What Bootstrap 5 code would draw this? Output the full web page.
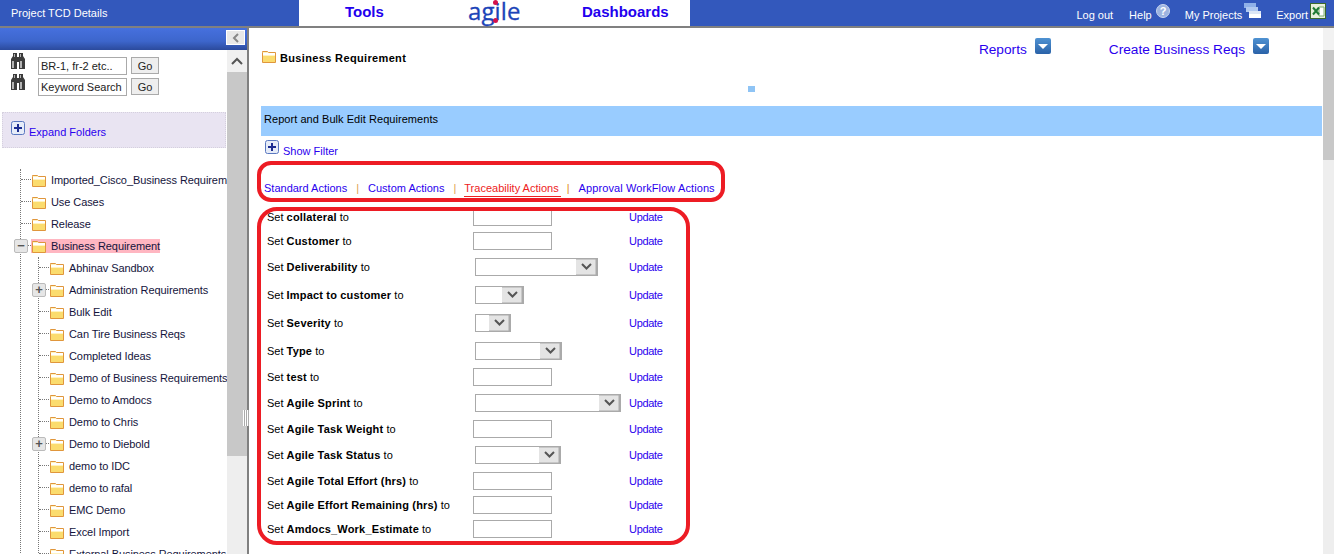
<!DOCTYPE html>
<html lang="en">
<head>
  <meta charset="UTF-8" />
  <title>Project TCD Details</title>
  <link href="https://cdn.jsdelivr.net/npm/bootstrap@5.3.3/dist/css/bootstrap.min.css" rel="stylesheet">
  <style>
    html, body { height: 554px; overflow: hidden; }
    body { font-family: "Liberation Sans", Arial, sans-serif; font-size: 11px; color: #000; background: #fff; }
    a { color: #2a00ee; text-decoration: none; }

    .top-head { height: 28px; background: #3358bc; border-bottom: 2px solid #808080; color: #fff; }
    .head-title { width: 299px; padding-left: 11px; }
    .head-mid { width: 391px; background: #fff; padding-left: 46px; }
    .head-mid a { font-size: 15px; font-weight: 700; color: #2200ee; line-height: 24px; }
    .tools-link { width: 123px; }
    .logo-wrap { width: 114px; height: 26px; }
    .logo-word { font-family: "Open Sans", sans-serif; font-size: 24px; line-height: 22px; color: #1c44b8; letter-spacing: .1px; display: block; -webkit-text-stroke: .3px #1c44b8; }
    .logo-dot { position: absolute; width: 5px; height: 5px; border-radius: 50%; background: #d3124a; left: 25px; }
    .dot-top { top: 0; }
    .dot-low { top: 18px; }
    .head-right { flex: 1; height: 26px; padding-right: 8px; }
    .head-right span { margin-top: 7px; line-height: 16px; }
    .gap-help { margin-left: 16px; }
    .gap-icon { margin-left: 4px; margin-top: 4px; }
    .gap-proj { margin-left: 15px; }
    .gap-icon2 { margin-left: 2px; margin-top: 3px; }
    .gap-exp { margin-left: 15px; }

    .work-area { height: 526px; }
    .side-pane { width: 247px; flex: none; }
    .side-bar-top { height: 22px; background: linear-gradient(#4670de, #3d66cc 60%, #2b4a9c); padding: 2px 2px 0 0; }
    .collapse-btn { width: 19px; height: 15px; background: #e8e8e8; border: 1px solid #fff; }
    .side-scroll { height: 504px; }
    .side-content { width: 227px; overflow: hidden; }
    .scroll-track { width: 20px; background: #eee; }
    .scroll-up { height: 22px; background: #f0f0f0; }
    .scroll-thumb { height: 384px; background: #c8c8c8; }
    .gutter { width: 2px; background: #808080; flex: none; }
    .grip { position: absolute; left: -4px; top: 382px; width: 6px; height: 16px; background: repeating-linear-gradient(90deg, #fff 0 1px, #aaa 1px 2px); }

    .search-top { padding-top: 3px; }
    .search-line { height: 21px; padding-left: 10px; }
    .search-box { width: 89px; height: 18px; margin: 4px 4px 0 12px; border: 1px solid #aaa; padding: 0 2px; font-size: 11px; font-family: inherit; color: #222; }
    .go-btn { width: 28px; height: 17px; margin-top: 4px; background: #eee; border: 1px solid #aaa; font-size: 11px; padding: 0; color: #222; }
    .expand-box { margin: 17px 1px 21px 2px; height: 36px; background: #e9e4f2; border: 1px dotted #d5d0de; padding: 8px 0 0 8px; }
    .expand-box a { padding-top: 3px; }

    .tree-root, .tree-sub { list-style: none; padding: 0; margin: 0; border-left: 1px dotted #777; }
    .tree-root { margin-left: 20px; white-space: nowrap; }
    .tree-sub { margin-left: 6px; }
    .tree-root li { position: relative; padding-left: 11px; }
    .tree-root li::before { content: ""; position: absolute; left: 0; top: 10px; width: 10px; border-top: 1px dotted #777; }
    .tree-row { height: 22px; color: #14143c; gap: 5px; letter-spacing: -.08px; }
    .tree-row svg, .tree-hit svg { flex: none; }
    .tree-hit { background: #ffb6c1; height: 14px; gap: 5px; margin-left: -1px; padding-left: 1px; }
    .tree-box { position: absolute; top: 4px; left: -7px; width: 14px; height: 14px; background: #e6e6e6; border: 1px solid #bbb; border-radius: 2px; color: #555; font: 700 13px/11px "Liberation Sans", sans-serif; text-align: center; z-index: 1; }

    .main-pane { min-width: 0; }
    .main-body { width: 1074px; padding-left: 12px; }
    .main-title { height: 78px; padding-right: 54px; }
    .title-name { padding: 21px 0 0 1px; height: 40px; }
    .title-name b { font-size: 11px; letter-spacing: .35px; }
    .title-link { font-size: 13.7px; color: #2a00ee; margin-top: 11px; line-height: 21px; }
    .drop-btn { position: relative; width: 16px; height: 16px; margin: 10px 0 0 8px; background: linear-gradient(#4f92d2, #2a62a8); border-radius: 2px; }
    .drop-btn::after { content: ""; position: absolute; left: 3px; top: 6px; border: 5px solid transparent; border-top-color: #fff; border-bottom: 0; }
    .gap-create { margin-left: 58px; }
    .tick-mark { position: absolute; left: 487px; top: 58px; width: 7px; height: 6px; background: #8fc4f5; }
    .band { width: 1061px; height: 30px; background: #99ccff; padding: 0 0 4px 3px; letter-spacing: .05px; }
    .filter-line { height: 44px; padding: 4px 0 0 4px; }
    .filter-line a { padding-top: 3px; }
    .action-tabs { height: 25px; padding-left: 3px; }
    .action-tabs i { font-style: normal; color: #e0a050; margin: 0 9px; }
    .action-tabs .on { color: #ee2222; border-bottom: 1px solid #ee2222; padding-right: 2px; margin-left: -1px; height: 17px; }
    .action-tabs .on + i { margin: 0 9px 0 6px; color: #e08a20; }
    .tab-last { letter-spacing: .1px; }
    .set-line { padding-left: 6px; }
    .set-line b { letter-spacing: .18px; }
    .set-line a { letter-spacing: -.3px; }
    .set-label { width: 206px; }
    .set-ctl { width: 156px; }
    .h-24 { height: 24px; }
    .h-28 { height: 28px; }
    .set-input { width: 79px; height: 18px; border: 1px solid #aaa; }
    .set-pick { appearance: none; height: 18px; margin-left: 2px; border: 1px solid #aaa; padding: 0; background: #fff url("data:image/svg+xml,%3Csvg xmlns='http://www.w3.org/2000/svg' width='21' height='18'%3E%3Crect width='21' height='18' fill='%23e4e4e4'/%3E%3Cpath d='M0 0h21v1.500H0zM0 16.500h21V18H0zM19.500 0H21v18h-1.500z' fill='%23aaa'/%3E%3Cpath d='M6 6l4.500 4.500L15 6' fill='none' stroke='%23555' stroke-width='2'/%3E%3C/svg%3E") no-repeat right center; }
    .w-a { width: 123px; } .w-b { width: 49px; } .w-c { width: 36px; } .w-d { width: 87px; } .w-e { width: 146px; } .w-f { width: 86px; }

    .main-scroll { width: 11px; background: #eee; flex: none; margin-left: auto; }
    .main-scroll-up { height: 22px; background: #f2f2f2; }
    .main-scroll-thumb { height: 110px; background: #c8c8c8; }
    .ring { position: absolute; border: 4px solid #ed1c24; pointer-events: none; }
    .ring-a { left: 8px; top: 133px; width: 468px; height: 41px; border-radius: 14px; }
    .ring-b { left: 8px; top: 179px; width: 433px; height: 338px; border-radius: 20px; }
  </style>
</head>
<body>
  <svg width="0" height="0" class="position-absolute">
    <symbol id="fold" viewBox="0 0 14 13">
      <path d="M.5 2.500V1.500h5l1 1h7v10H.5z" fill="#fff3c0" stroke="#e0963c"/>
      <rect x="1" y="3" width="12" height="2" fill="#fff"/>
      <path d="M1 6h12v6H1z" fill="#fbdc6e"/>
    </symbol>
    <symbol id="plus" viewBox="0 0 14 14">
      <rect x=".5" y=".5" width="13" height="13" rx="2" fill="#e6ecf8" stroke="#5a78c0"/>
      <path d="M7 3v8M3 7h8" stroke="#1c2c90" stroke-width="2"/>
    </symbol>
    <symbol id="binoc" viewBox="0 0 16 16">
      <path d="M3 0h4v4h2V0h4v3l2 3v10H9V9H7v7H1V6l2-3z" fill="#3c3c3c"/>
      <path d="M2 8h2v7H2zM10 8h2v7h-2zM4 1h1v3H4zM10 1h1v3h-1z" fill="#b4b4b4"/>
    </symbol>
  </svg>

  <header class="top-head d-flex">
    <div class="head-title d-flex align-items-center">Project TCD Details</div>
    <div class="head-mid d-flex align-items-start">
      <a href="#" class="tools-link">Tools</a>
      <div class="logo-wrap position-relative">
        <span class="logo-word">agile</span>
        <span class="logo-dot dot-top"></span>
        <span class="logo-dot dot-low"></span>
      </div>
      <a href="#">Dashboards</a>
    </div>
    <div class="head-right d-flex align-items-start justify-content-end">
      <span>Log out</span>
      <span class="gap-help">Help</span>
      <svg class="gap-icon" width="14" height="14" viewBox="0 0 14 14"><circle cx="7" cy="7" r="6.500" fill="#9db4e0" stroke="#c8d4ee"/><text x="7" y="11" text-anchor="middle" font-size="11" font-weight="700" fill="#fff" font-family="Liberation Sans">?</text></svg>
      <span class="gap-proj">My Projects</span>
      <svg class="gap-icon2" width="17" height="16" viewBox="0 0 17 16"><rect x="0" y="0" width="12" height="5" fill="#8fb0e8"/><rect x="2" y="4" width="12" height="5" fill="#b0c8f0"/><rect x="5" y="8" width="12" height="7" fill="#dce6f6"/><rect x="5" y="11" width="12" height="4" fill="#fff"/></svg>
      <span class="gap-exp">Export</span>
      <svg class="gap-icon2" width="16" height="16" viewBox="0 0 16 16"><rect x=".5" y=".5" width="15" height="15" fill="#e8f0dc" stroke="#3c6a2c"/><path d="M9 4h5v9H9z" fill="#fff" stroke="#7aaa70"/><path d="M3 4.500l6 7M9 4.500l-6 7" stroke="#1f7a34" stroke-width="2"/></svg>
    </div>
  </header>

  <div class="work-area d-flex">
    <aside class="side-pane">
      <div class="side-bar-top d-flex justify-content-end">
        <div class="collapse-btn d-flex align-items-center justify-content-center">
          <svg width="8" height="10" viewBox="0 0 8 10"><path d="M6 1L2 5l4 4" fill="none" stroke="#888" stroke-width="2"/></svg>
        </div>
      </div>
      <div class="side-scroll d-flex">
        <div class="side-content">
          <div class="search-top">
            <div class="search-line d-flex align-items-start">
              <svg width="16" height="16"><use href="#binoc"/></svg>
              <input class="search-box" value="BR-1, fr-2 etc..">
              <button class="go-btn">Go</button>
            </div>
            <div class="search-line d-flex align-items-start">
              <svg width="16" height="16"><use href="#binoc"/></svg>
              <input class="search-box" value="Keyword Search">
              <button class="go-btn">Go</button>
            </div>
          </div>
          <div class="expand-box d-flex align-items-start">
            <svg width="14" height="14"><use href="#plus"/></svg>
            <a href="#" class="ms-1">Expand Folders</a>
          </div>
          <ul class="tree-root">
            <li><div class="tree-row d-flex align-items-center"><svg width="14" height="13"><use href="#fold"/></svg>Imported_Cisco_Business Requirements</div></li>
            <li><div class="tree-row d-flex align-items-center"><svg width="14" height="13"><use href="#fold"/></svg>Use Cases</div></li>
            <li><div class="tree-row d-flex align-items-center"><svg width="14" height="13"><use href="#fold"/></svg>Release</div></li>
            <li>
              <span class="tree-box">&minus;</span>
              <div class="tree-row d-flex align-items-center"><span class="tree-hit d-flex align-items-center"><svg width="14" height="13"><use href="#fold"/></svg><span>Business Requirement</span></span></div>
              <ul class="tree-sub">
                <li><div class="tree-row d-flex align-items-center"><svg width="14" height="13"><use href="#fold"/></svg>Abhinav Sandbox</div></li>
                <li><span class="tree-box">+</span><div class="tree-row d-flex align-items-center"><svg width="14" height="13"><use href="#fold"/></svg>Administration Requirements</div></li>
                <li><div class="tree-row d-flex align-items-center"><svg width="14" height="13"><use href="#fold"/></svg>Bulk Edit</div></li>
                <li><div class="tree-row d-flex align-items-center"><svg width="14" height="13"><use href="#fold"/></svg>Can Tire Business Reqs</div></li>
                <li><div class="tree-row d-flex align-items-center"><svg width="14" height="13"><use href="#fold"/></svg>Completed Ideas</div></li>
                <li><div class="tree-row d-flex align-items-center"><svg width="14" height="13"><use href="#fold"/></svg>Demo of Business Requirements</div></li>
                <li><div class="tree-row d-flex align-items-center"><svg width="14" height="13"><use href="#fold"/></svg>Demo to Amdocs</div></li>
                <li><div class="tree-row d-flex align-items-center"><svg width="14" height="13"><use href="#fold"/></svg>Demo to Chris</div></li>
                <li><span class="tree-box">+</span><div class="tree-row d-flex align-items-center"><svg width="14" height="13"><use href="#fold"/></svg>Demo to Diebold</div></li>
                <li><div class="tree-row d-flex align-items-center"><svg width="14" height="13"><use href="#fold"/></svg>demo to IDC</div></li>
                <li><div class="tree-row d-flex align-items-center"><svg width="14" height="13"><use href="#fold"/></svg>demo to rafal</div></li>
                <li><div class="tree-row d-flex align-items-center"><svg width="14" height="13"><use href="#fold"/></svg>EMC Demo</div></li>
                <li><div class="tree-row d-flex align-items-center"><svg width="14" height="13"><use href="#fold"/></svg>Excel Import</div></li>
                <li><div class="tree-row d-flex align-items-center"><svg width="14" height="13"><use href="#fold"/></svg>External Business Requirements</div></li>
              </ul>
            </li>
          </ul>
        </div>
        <div class="scroll-track">
          <div class="scroll-up d-flex align-items-center justify-content-center">
            <svg width="12" height="8" viewBox="0 0 12 8"><path d="M1 7l5-5 5 5" fill="none" stroke="#555" stroke-width="2"/></svg>
          </div>
          <div class="scroll-thumb"></div>
        </div>
      </div>
    </aside>
    <div class="gutter position-relative"><div class="grip"></div></div>

    <main class="main-pane flex-grow-1 d-flex position-relative">
      <div class="main-body">
        <div class="main-title position-relative d-flex align-items-start">
          <div class="title-name d-flex align-items-center gap-1">
            <svg width="14" height="13" class="mb-1"><use href="#fold"/></svg><b>Business Requirement</b>
          </div>
          <a href="#" class="title-link ms-auto">Reports</a><span class="drop-btn"></span>
          <a href="#" class="title-link gap-create">Create Business Reqs</a><span class="drop-btn"></span>
          <span class="tick-mark"></span>
        </div>
        <div class="band d-flex align-items-center">Report and Bulk Edit Requirements</div>
        <div class="filter-line d-flex align-items-start">
          <svg width="14" height="14"><use href="#plus"/></svg>
          <a href="#" class="ms-1">Show Filter</a>
        </div>
        <div class="action-tabs d-flex align-items-start">
          <a href="#">Standard Actions</a><i>|</i><a href="#">Custom Actions</a><i>|</i><a href="#" class="on">Traceability Actions</a><i>|</i><a href="#" class="tab-last">Approval WorkFlow Actions</a>
        </div>
        <div class="set-line d-flex align-items-center h-24"><div class="set-label">Set <b>collateral</b> to</div><div class="set-ctl"><input class="set-input d-block"></div><a href="#">Update</a></div>
        <div class="set-line d-flex align-items-center h-24"><div class="set-label">Set <b>Customer</b> to</div><div class="set-ctl"><input class="set-input d-block"></div><a href="#">Update</a></div>
        <div class="set-line d-flex align-items-center h-28"><div class="set-label">Set <b>Deliverability</b> to</div><div class="set-ctl"><select class="set-pick d-block w-a"></select></div><a href="#">Update</a></div>
        <div class="set-line d-flex align-items-center h-28"><div class="set-label">Set <b>Impact to customer</b> to</div><div class="set-ctl"><select class="set-pick d-block w-b"></select></div><a href="#">Update</a></div>
        <div class="set-line d-flex align-items-center h-28"><div class="set-label">Set <b>Severity</b> to</div><div class="set-ctl"><select class="set-pick d-block w-c"></select></div><a href="#">Update</a></div>
        <div class="set-line d-flex align-items-center h-28"><div class="set-label">Set <b>Type</b> to</div><div class="set-ctl"><select class="set-pick d-block w-d"></select></div><a href="#">Update</a></div>
        <div class="set-line d-flex align-items-center h-24"><div class="set-label">Set <b>test</b> to</div><div class="set-ctl"><input class="set-input d-block"></div><a href="#">Update</a></div>
        <div class="set-line d-flex align-items-center h-28"><div class="set-label">Set <b>Agile Sprint</b> to</div><div class="set-ctl"><select class="set-pick d-block w-e"></select></div><a href="#">Update</a></div>
        <div class="set-line d-flex align-items-center h-24"><div class="set-label">Set <b>Agile Task Weight</b> to</div><div class="set-ctl"><input class="set-input d-block"></div><a href="#">Update</a></div>
        <div class="set-line d-flex align-items-center h-28"><div class="set-label">Set <b>Agile Task Status</b> to</div><div class="set-ctl"><select class="set-pick d-block w-f"></select></div><a href="#">Update</a></div>
        <div class="set-line d-flex align-items-center h-24"><div class="set-label">Set <b>Agile Total Effort (hrs)</b> to</div><div class="set-ctl"><input class="set-input d-block"></div><a href="#">Update</a></div>
        <div class="set-line d-flex align-items-center h-24"><div class="set-label">Set <b>Agile Effort Remaining (hrs)</b> to</div><div class="set-ctl"><input class="set-input d-block"></div><a href="#">Update</a></div>
        <div class="set-line d-flex align-items-center h-24"><div class="set-label">Set <b>Amdocs_Work_Estimate</b> to</div><div class="set-ctl"><input class="set-input d-block"></div><a href="#">Update</a></div>
      </div>
      <div class="main-scroll"><div class="main-scroll-up"></div><div class="main-scroll-thumb"></div></div>
      <div class="ring ring-a"></div>
      <div class="ring ring-b"></div>
    </main>
  </div>
  <script src="https://cdn.jsdelivr.net/npm/bootstrap@5.3.3/dist/js/bootstrap.bundle.min.js"></script>
</body>
</html>
